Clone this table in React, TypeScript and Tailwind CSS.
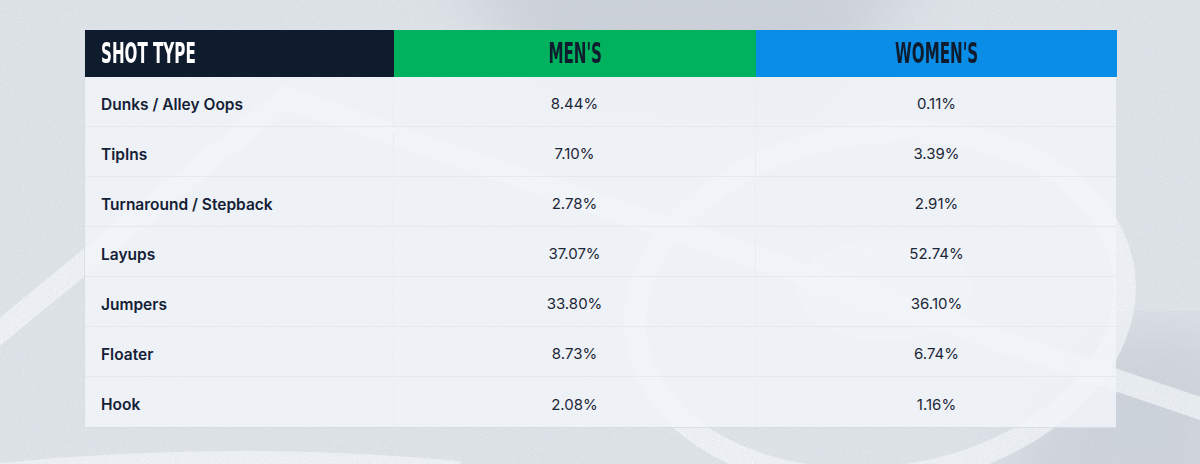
import React from "react";

const rows = [
  { type: "Dunks / Alley Oops", men: "8.44%", women: "0.11%" },
  { type: "TipIns", men: "7.10%", women: "3.39%" },
  { type: "Turnaround / Stepback", men: "2.78%", women: "2.91%" },
  { type: "Layups", men: "37.07%", women: "52.74%" },
  { type: "Jumpers", men: "33.80%", women: "36.10%" },
  { type: "Floater", men: "8.73%", women: "6.74%" },
  { type: "Hook", men: "2.08%", women: "1.16%" },
];

function CourtBackdrop() {
  return (
    <svg className="absolute inset-0 h-full w-full" viewBox="0 0 1200 464" aria-hidden="true">
      <defs>
        <filter id="grain" x="0" y="0" width="100%" height="100%">
          <feTurbulence type="fractalNoise" baseFrequency="1.1" numOctaves="2" stitchTiles="stitch" />
          <feColorMatrix type="matrix" values="0 0 0 0 0.5  0 0 0 0 0.56  0 0 0 0 0.63  0 0 0 0.9 -0.25" />
        </filter>
        <filter id="soft">
          <feGaussianBlur stdDeviation="30" />
        </filter>
      </defs>
      {/* shadowed court area */}
      <polygon points="440,-40 930,-40 800,120 560,90" fill="#b7bec8" opacity="0.5" filter="url(#soft)" />
      <polygon points="1080,330 1240,330 1240,520 980,520" fill="#b9c0c9" opacity="0.45" filter="url(#soft)" />
      {/* court lines */}
      <g fill="none" stroke="#f5f8fb" strokeOpacity="0.75" strokeWidth="22">
        <polyline points="-20,348 285,98 1240,422" strokeLinejoin="miter" />
        <ellipse cx="880" cy="305" rx="246" ry="172" transform="rotate(-8 880 305)" />
        <path d="M -20 472 Q 220 446 460 468" strokeWidth="14" />
      </g>
      <ellipse cx="884" cy="290" rx="87" ry="51" fill="#f5f8fb" opacity="0.6" />
      <rect width="1200" height="464" filter="url(#grain)" opacity="0.55" />
    </svg>
  );
}

export default function App() {
  return (
    <div className="relative h-[464px] w-[1200px] overflow-hidden bg-[#e1e5ea] font-['Inter',sans-serif] text-[#142035]">
      <CourtBackdrop />

      <div className="relative pl-[84px] pt-[30px]">
        <div className="w-[1032px] border-b border-l border-[#d9dee5]">
          {/* Header */}
          <div className="grid h-[47px] grid-cols-[309px_362px_361px] font-['DejaVu_Sans_Condensed','DejaVu_Sans',sans-serif] text-[29px] font-bold leading-none">
            <div className="flex items-center bg-[#0e1c2e] pl-4 text-white">
              <span className="inline-block origin-left scale-x-[0.58]">SHOT TYPE</span>
            </div>
            <div className="flex items-center justify-center bg-[#00b15d] text-[#0f1c2e]">
              <span className="inline-block scale-x-[0.58]">MEN'S</span>
            </div>
            <div className="flex items-center justify-center bg-[#0a8de6] text-[#0f1c2e]">
              <span className="inline-block scale-x-[0.58]">WOMEN'S</span>
            </div>
          </div>

          {/* Body */}
          <div className="bg-[#f1f4f8]/85">
            {rows.map((row, i) => (
              <div
                key={row.type}
                className={`grid h-[50px] grid-cols-[309px_362px_361px] pt-[6px] text-[15px] ${
                  i < rows.length - 1 ? "border-b border-[#e5e9ee]" : ""
                }`}
              >
                <div className="flex items-center border-r border-[#e8ecf0] pl-4 text-[15.5px] font-semibold">{row.type}</div>
                <div className="flex items-center justify-center border-r border-[#e8ecf0] text-[#1b2637]">{row.men}</div>
                <div className="flex items-center justify-center text-[#1b2637]">{row.women}</div>
              </div>
            ))}
          </div>
        </div>
      </div>
    </div>
  );
}
